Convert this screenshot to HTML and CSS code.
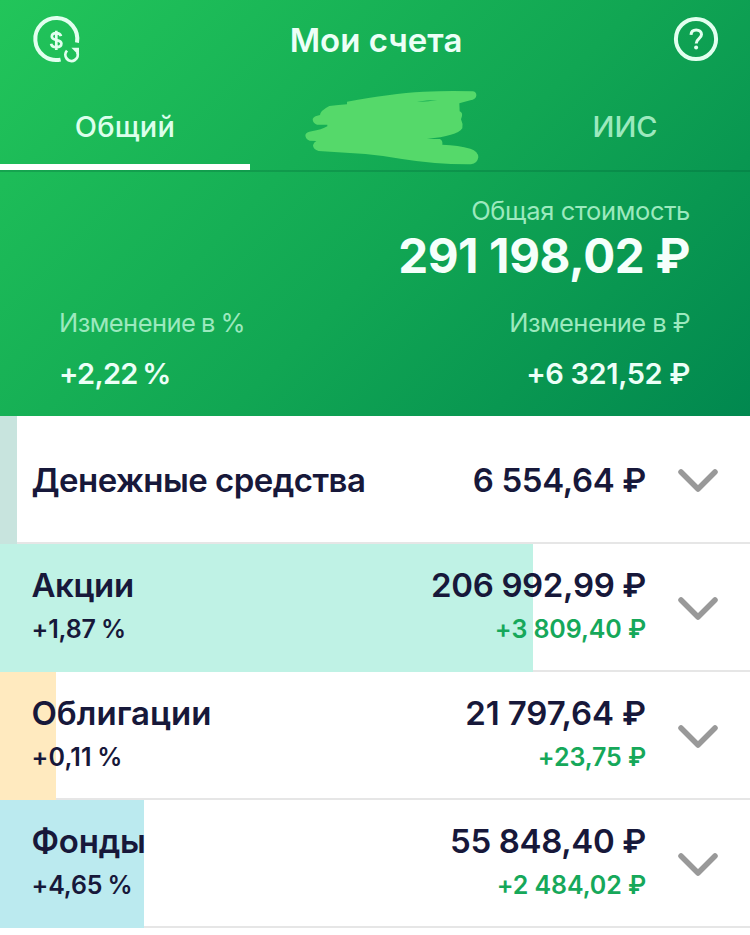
FILE: index.html
```
<!DOCTYPE html>
<html lang="ru">
<head>
<meta charset="utf-8">
<title>Мои счета</title>
<link rel="stylesheet" href="styles.css">
</head>
<body>
<header class="summary">
  <div class="navbar">
    <svg class="nav-icon" width="50" height="50" viewBox="0 0 50 50" fill="none" stroke="currentColor">
      <path d="M46 28.6A21 21 0 1 0 29.6 45.6" stroke-width="4"/>
      <path d="M30 22.1C29.4 20 27.6 19.2 25.3 19.2C22.6 19.2 20.8 20.5 20.8 22.6C20.8 27.6 30.4 24.6 30.4 29.6C30.4 31.8 28.3 33.2 25.4 33.2C22.6 33.2 20.5 32 20.1 29.7M25.3 16.8V36" stroke-width="2.7"/>
      <path d="M36 36.6A6.2 6.2 0 1 0 46.2 38.2" stroke-width="2.8"/>
      <path d="M40.4 33.8H48V41.4Z" fill="currentColor" stroke="none"/>
    </svg>
    <h1 class="title">Мои счета</h1>
    <svg class="nav-icon" width="50" height="50" viewBox="0 0 50 50" fill="none" stroke="currentColor">
      <circle cx="25" cy="25" r="20.1" stroke-width="4"/>
      <path d="M20 20.8C20.2 17.4 22.3 15.9 25.2 15.9C28.3 15.9 30.5 17.7 30.5 20.5C30.5 24.6 25.2 24.6 25.2 29.4" stroke-width="3"/>
      <circle cx="25.1" cy="33.4" r="2" fill="currentColor" stroke="none"/>
    </svg>
  </div>
  <nav class="tabs">
    <div class="tab active"><span class="tab-main">Общий</span></div>
    <div class="tab">
      <svg class="scribble" width="174" height="75" viewBox="164 270 522 225">
        <path fill-rule="evenodd" d="M290 305C380 288 450 279 520 275Q600 271 668 274Q679 276 678 287Q676 298 660 301L627 310L628 334Q637 337 635 348L632 358Q639 372 636 385C625 401 590 411 530 417L568 417Q578 421 576 434Q625 435 660 446Q684 454 684 472Q681 491 662 493Q560 494 455 477Q400 467 345 462L205 453Q188 448 188 436Q190 427 198 423L178 422Q165 417 165 405Q168 396 184 394Q214 389 231 379V374L200 374Q187 370 187 357Q190 348 209 345Q210 332 237 318Q265 315 290 313ZM500 305Q530 306 561 300Q528 301 500 305Z"/>
      </svg>
    </div>
    <div class="tab"><span>ИИС</span></div>
  </nav>
  <div class="total">
    <div class="caption caption-total">Общая стоимость</div>
    <div class="total-value">291 198,02 ₽</div>
  </div>
  <div class="changes">
    <div>
      <div class="caption caption-pct">Изменение в %</div>
      <div class="change change-pct">+2,22 %</div>
    </div>
    <div class="right">
      <div class="caption caption-rub">Изменение в ₽</div>
      <div class="change">+6 321,52 ₽</div>
    </div>
  </div>
</header>
<main>
  <section class="row cash">
    <div class="info"><div class="name name-cash">Денежные средства</div></div>
    <div class="sums"><div class="sum">6 554,64 ₽</div></div>
    <svg class="chevron" width="40" height="24" viewBox="0 0 40 24"><path d="M3 3L20 20L37 3"/></svg>
  </section>
  <section class="row stocks">
    <div class="info"><div class="name name-stocks">Акции</div><div class="pct">+1,87 %</div></div>
    <div class="sums"><div class="sum">206 992,99 ₽</div><div class="gain">+3 809,40 ₽</div></div>
    <svg class="chevron" width="40" height="24" viewBox="0 0 40 24"><path d="M3 3L20 20L37 3"/></svg>
  </section>
  <section class="row bonds">
    <div class="info"><div class="name">Облигации</div><div class="pct pct-bonds">+0,11 %</div></div>
    <div class="sums"><div class="sum sum-bonds">21 797,64 ₽</div><div class="gain">+23,75 ₽</div></div>
    <svg class="chevron" width="40" height="24" viewBox="0 0 40 24"><path d="M3 3L20 20L37 3"/></svg>
  </section>
  <section class="row funds">
    <div class="info"><div class="name name-funds">Фонды</div><div class="pct">+4,65 %</div></div>
    <div class="sums"><div class="sum">55 848,40 ₽</div><div class="gain">+2 484,02 ₽</div></div>
    <svg class="chevron" width="40" height="24" viewBox="0 0 40 24"><path d="M3 3L20 20L37 3"/></svg>
  </section>
</main>
</body>
</html>
```
FILE: styles.css
```
* { box-sizing: border-box; }
body {
  margin: 0;
  background: #fff;
  color: #17183a;
  font-family: Inter, sans-serif;
  white-space: nowrap;
}
.summary {
  height: 416px;
  color: #e2ffef;
  background: linear-gradient(135deg, #22c55a 0%, #11a653 55%, #01884f 100%);
}
.navbar {
  display: flex;
  justify-content: space-between;
  height: 81px;
  padding: 14px 29px 0 31px;
}
.nav-icon { display: block; }
.title {
  margin: 0;
  font-size: 33px;
  font-weight: 600;
  line-height: 52px;
  color: #ecfff7;
}
.tabs {
  display: grid;
  grid-template-columns: repeat(3, 1fr);
  height: 91px;
  border-bottom: 2px solid rgba(0, 90, 50, .25);
}
.tab {
  height: 89px;
  padding-top: 21px;
  text-align: center;
  font-size: 29px;
  font-weight: 540;
  line-height: 50px;
  letter-spacing: -.1px;
  color: #9ce9be;
}
.tab.active {
  color: #dcffec;
  border-bottom: 6px solid #fff;
}
.tab-main { letter-spacing: .3px; }
.scribble {
  display: block;
  margin: -12px 0 0 54.5px;
  fill: #55d96a;
}
.total {
  padding: 22px 60px 0;
  text-align: right;
}
.caption {
  font-size: 25.5px;
  font-weight: 430;
  line-height: 34px;
  color: #9ce9be;
}
.caption-total { letter-spacing: -.35px; }
.caption-rub { letter-spacing: -.55px; }
.caption-pct { letter-spacing: -.55px; word-spacing: -1px; }
.total-value {
  font-size: 47.5px;
  font-weight: 700;
  line-height: 56px;
  letter-spacing: -.4px;
  color: #f5fffb;
}
.changes {
  display: flex;
  justify-content: space-between;
  padding: 22px 60px 0 59px;
}
.right { text-align: right; }
.change {
  margin-top: 15px;
  font-size: 29px;
  font-weight: 600;
  line-height: 38px;
  letter-spacing: -.37px;
  color: #ecfff7;
}
.change-pct { letter-spacing: -.7px; word-spacing: -2px; }
.row {
  display: flex;
  align-items: center;
  height: 128px;
  padding: 0 32px 0 31.5px;
  background: linear-gradient(var(--tint), var(--tint)) 0 0 / var(--share) 100% no-repeat,
    linear-gradient(#e6e6e6, #e6e6e6) 0 100% / 100% 2px no-repeat;
}
.cash { --tint: #c8e4de; --share: 17px; }
.stocks { --tint: #bff2e5; --share: 533px; }
.bonds { --tint: #ffeabf; --share: 56px; }
.funds { --tint: #bbeaef; --share: 144px; }
.info { flex: 1; }
.sums { text-align: right; }
.stocks > div, .bonds > div, .funds > div { padding-bottom: 6px; }
.name, .sum {
  font-size: 33px;
  font-weight: 590;
  line-height: 48px;
}
.name-cash { letter-spacing: -.55px; }
.name-stocks { letter-spacing: -.4px; }
.name-funds { letter-spacing: -.2px; }
.sum { letter-spacing: -.36px; }
.sum-bonds { letter-spacing: -.1px; }
.pct, .gain {
  font-size: 25px;
  font-weight: 560;
  line-height: 40px;
}
.pct { letter-spacing: -.15px; word-spacing: -1px; }
.pct-bonds { letter-spacing: .15px; }
.gain { letter-spacing: -.1px; color: #16a85a; }
.chevron {
  margin: 1px 0 0 32px;
  fill: none;
  stroke: #999;
  stroke-width: 5.5;
  stroke-linecap: round;
  stroke-linejoin: round;
}
```
